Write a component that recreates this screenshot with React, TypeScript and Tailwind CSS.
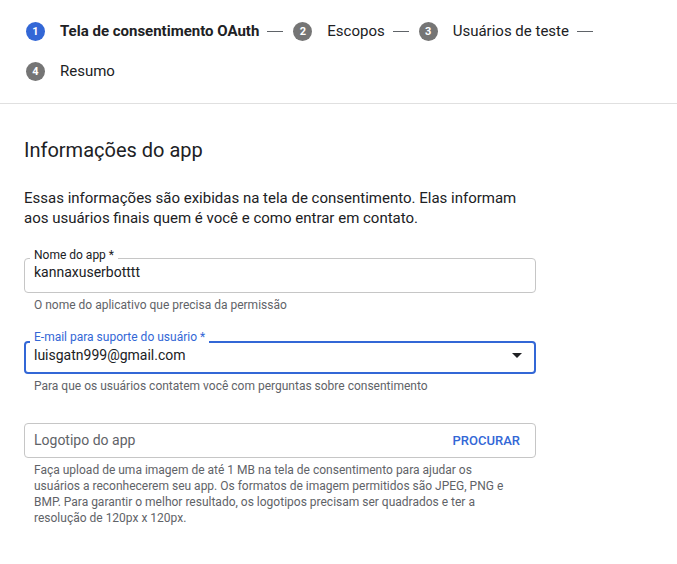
import React from "react"

const steps = [
  { n: 1, label: "Tela de consentimento OAuth", active: true, dash: true },
  { n: 2, label: "Escopos", active: false, dash: true },
  { n: 3, label: "Usuários de teste", active: false, dash: true },
  { n: 4, label: "Resumo", active: false, dash: false },
]

function Stepper() {
  return (
    <div className="flex flex-wrap items-center gap-y-4 pl-[26px] pr-6 pt-[19px] pb-5 border-b border-[#e0e0e0]">
      {steps.map((s) => (
        <div key={s.n} className="flex items-center h-6">
          <span
            className={`flex items-center justify-center w-[19px] h-[19px] rounded-full text-white text-[11px] font-bold leading-none ${s.active ? "bg-[#3367d6]" : "bg-[#757575]"}`}
          >
            {s.n}
          </span>
          <span
            className={`ml-[15px] text-[15px] leading-5 text-[#202124] ${s.active ? "font-bold" : "font-normal"}`}
          >
            {s.label}
          </span>
          {s.dash && (
            <>
              <span className="ml-[8px] w-4 h-px bg-[#5f6368]" />
              <span className="w-[10px]" />
            </>
          )}
        </div>
      ))}
    </div>
  )
}

function Helper({ children }: { children: React.ReactNode }) {
  return <p className="pl-[10px] pr-[24px] mt-[4px] text-[12px] leading-4 text-[#5f6368]">{children}</p>
}

export default function App() {
  return (
    <div className="bg-white min-h-screen text-[#202124]" style={{ fontFamily: "Roboto, 'Liberation Sans', sans-serif" }}>
      <Stepper />

      <div className="px-6 pt-8">
        <div className="max-w-[512px]">
          <h2 className="text-[20px] leading-7 font-normal">Informações do app</h2>
          <p className="mt-6 text-[15px] leading-5">
            Essas informações são exibidas na tela de consentimento. Elas informam aos usuários finais quem é você e como entrar em contato.
          </p>

          {/* Nome do app */}
          <div className="relative mt-[30px] h-[35px] rounded border border-[#c6c6c6] px-[9px] pt-[3px]">
            <span className="absolute left-[5px] top-[-12px] px-1 bg-white text-[12px] leading-4 text-[#202124]">
              Nome do app *
            </span>
            <div className="text-[14px] leading-5">kannaxuserbotttt</div>
          </div>
          <Helper>O nome do aplicativo que precisa da permissão</Helper>

          {/* E-mail */}
          <div className="relative mt-[28px] h-[33px] rounded border-2 border-[#3367d6] pl-[8px] pr-3 pt-[2px] flex items-start justify-between">
            <span className="absolute left-[4px] top-[-14px] px-1 bg-white text-[12px] leading-4 text-[#3367d6]">
              E-mail para suporte do usuário *
            </span>
            <div className="text-[14px] leading-5">luisgatn999@gmail.com</div>
            <svg width="10" height="5" viewBox="0 0 10 5" className="mt-[8px]">
              <path d="M0 0 L10 0 L5 5 Z" fill="#202124" />
            </svg>
          </div>
          <Helper>Para que os usuários contatem você com perguntas sobre consentimento</Helper>

          {/* Logotipo */}
          <div className="mt-[29px] h-[35px] rounded border border-[#c6c6c6] pl-[9px] pr-[15px] flex items-center justify-between">
            <span className="text-[14px] text-[#5f6368]">Logotipo do app</span>
            <span className="text-[13px] font-medium text-[#3367d6]">PROCURAR</span>
          </div>
          <Helper>
            Faça upload de uma imagem de até 1 MB na tela de consentimento para ajudar os usuários a reconhecerem seu app. Os formatos de imagem permitidos são JPEG, PNG e BMP. Para garantir o melhor resultado, os logotipos precisam ser quadrados e ter a resolução de 120px x 120px.
          </Helper>
        </div>
      </div>
    </div>
  )
}
